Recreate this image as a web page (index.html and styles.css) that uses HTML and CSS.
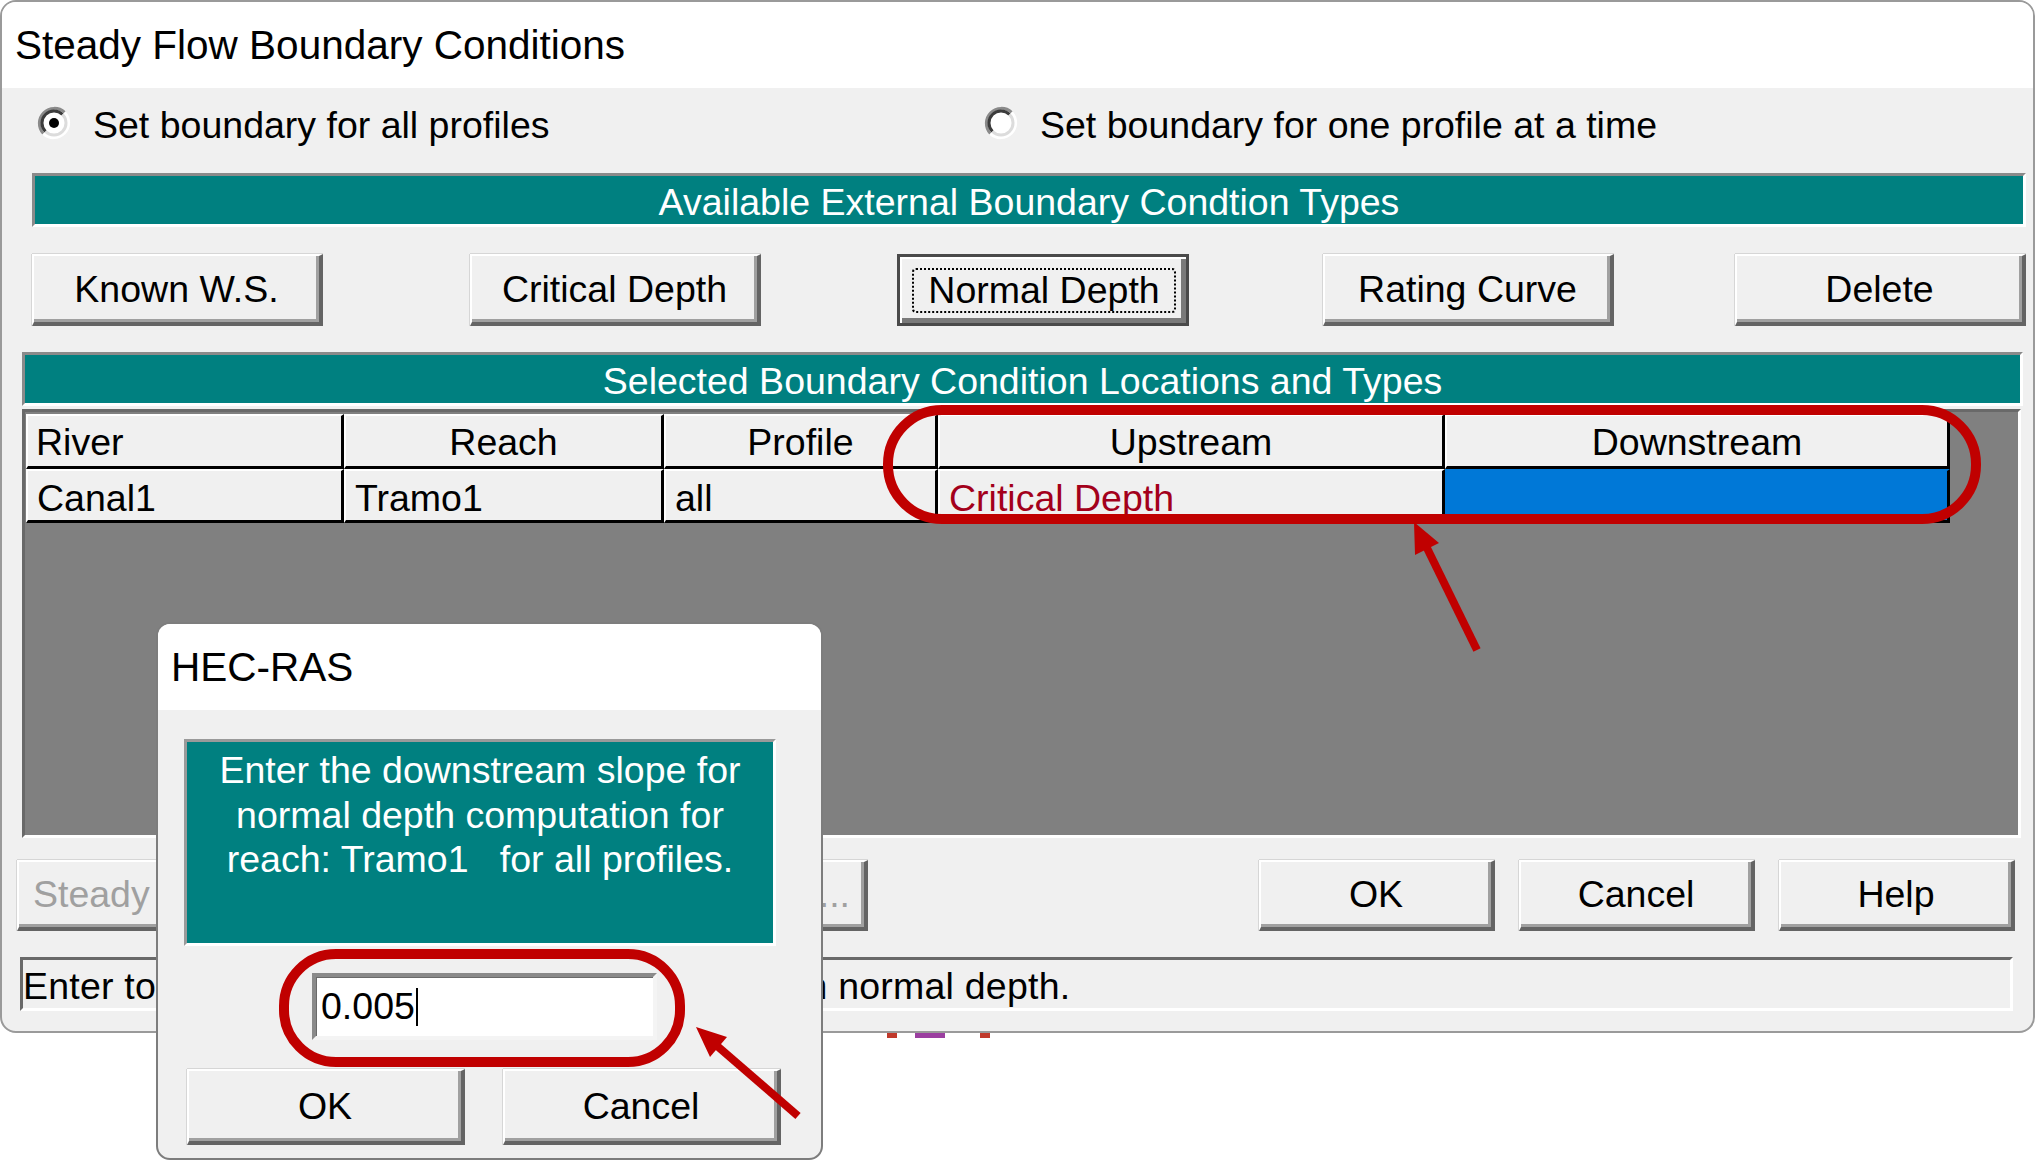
FILE: index.html
```html
<!DOCTYPE html>
<html>
<head>
<meta charset="utf-8">
<link rel="stylesheet" href="styles.css">
</head>
<body>
<div class="window">
  <div class="titlebar">Steady Flow Boundary Conditions</div>
  <div class="radios">
    <div class="radio">
      <svg class="radio-icon" width="34" height="34" viewBox="0 0 34 34">
        <circle cx="17" cy="17" r="15" fill="#fff"/>
        <path d="M6.4 27.6 A15 15 0 0 1 27.6 6.4" stroke="#8a8a8a" stroke-width="3" fill="none"/>
        <path d="M8.5 25.5 A12 12 0 0 1 25.5 8.5" stroke="#3c3c3c" stroke-width="3" fill="none"/>
        <path d="M27.6 6.4 A15 15 0 0 1 6.4 27.6" stroke="#ffffff" stroke-width="3" fill="none"/>
        <path d="M25.5 8.5 A12 12 0 0 1 8.5 25.5" stroke="#dcdcdc" stroke-width="3" fill="none"/>
        <circle cx="17" cy="17" r="5" fill="#000"/>
      </svg>
      <span>Set boundary for all profiles</span>
    </div>
    <div class="radio">
      <svg class="radio-icon" width="34" height="34" viewBox="0 0 34 34">
        <circle cx="17" cy="17" r="15" fill="#fff"/>
        <path d="M6.4 27.6 A15 15 0 0 1 27.6 6.4" stroke="#8a8a8a" stroke-width="3" fill="none"/>
        <path d="M8.5 25.5 A12 12 0 0 1 25.5 8.5" stroke="#3c3c3c" stroke-width="3" fill="none"/>
        <path d="M27.6 6.4 A15 15 0 0 1 6.4 27.6" stroke="#ffffff" stroke-width="3" fill="none"/>
        <path d="M25.5 8.5 A12 12 0 0 1 8.5 25.5" stroke="#dcdcdc" stroke-width="3" fill="none"/>
      </svg>
      <span>Set boundary for one profile at a time</span>
    </div>
  </div>

  <div class="banner banner-types">Available External Boundary Condtion Types</div>

  <div class="type-buttons">
    <button class="btn type-btn">Known W.S.</button>
    <button class="btn type-btn">Critical Depth</button>
    <button class="btn type-btn focused"><span class="focus-ring">Normal Depth</span></button>
    <button class="btn type-btn">Rating Curve</button>
    <button class="btn type-btn">Delete</button>
  </div>

  <div class="banner banner-selected">Selected Boundary Condition Locations and Types</div>

  <div class="grid-area">
    <table class="bc-table">
      <colgroup>
        <col class="c-river"><col class="c-reach"><col class="c-profile"><col class="c-up"><col class="c-down">
      </colgroup>
      <tr class="head">
        <td class="left">River</td>
        <td>Reach</td>
        <td>Profile</td>
        <td>Upstream</td>
        <td>Downstream</td>
      </tr>
      <tr class="data">
        <td>Canal1</td>
        <td>Tramo1</td>
        <td>all</td>
        <td class="crit">Critical Depth</td>
        <td class="sel"></td>
      </tr>
    </table>
  </div>

  <div class="bottom-row">
    <button class="btn wide disabled">Steady Flow Reach-Storage Area Optimization ...</button>
    <div class="actions">
      <button class="btn act">OK</button>
      <button class="btn act">Cancel</button>
      <button class="btn act">Help</button>
    </div>
  </div>

  <div class="status">Enter to set the downstream slope to be used in normal depth.</div>
</div>

<div class="dialog">
  <div class="dlg-title">HEC-RAS</div>
  <div class="dlg-body">
    <div class="dlg-msg">Enter the downstream slope for<br>normal depth computation for<br>reach: Tramo1&nbsp;&nbsp;&nbsp;for all profiles.</div>
    <div class="dlg-input"><span>0.005</span><span class="caret"></span></div>
    <div class="dlg-buttons">
      <button class="btn dlg-btn">OK</button>
      <button class="btn dlg-btn">Cancel</button>
    </div>
  </div>
</div>

<svg class="annotations" width="2038" height="1168" viewBox="0 0 2038 1168">
  <rect x="888" y="410" width="1088" height="109" rx="54" ry="54" fill="none" stroke="#c00000" stroke-width="10"/>
  <line x1="1477" y1="650" x2="1426" y2="546" stroke="#c00000" stroke-width="8"/>
  <polygon points="1414,522 1439,543 1415,555" fill="#c00000"/>
  <rect x="284" y="954" width="396" height="108" rx="52" ry="52" fill="none" stroke="#c00000" stroke-width="10"/>
  <line x1="798" y1="1116" x2="716" y2="1045" stroke="#c00000" stroke-width="8"/>
  <polygon points="696,1027 727,1037 710,1057" fill="#c00000"/>
  <rect x="887" y="1033" width="10" height="5" fill="#c0392b"/>
  <rect x="915" y="1033" width="30" height="5" fill="#9b3fa0"/>
  <rect x="980" y="1033" width="10" height="5" fill="#c0392b"/>
</svg>
</body>
</html>
```

FILE: styles.css
```css
html, body {
  margin: 0;
  padding: 0;
}

body {
  position: relative;
  width: 2038px;
  height: 1168px;
  overflow: hidden;
  background: #ffffff;
  font-family: "Liberation Sans", Arial, sans-serif;
  font-size: 37.5px;
  color: #000;
}

.window {
  box-sizing: border-box;
  width: 2035px;
  height: 1033px;
  border: 2px solid #9a9a9a;
  border-radius: 16px;
  background: #f0f0f0;
  overflow: hidden;
  display: flex;
  flex-direction: column;
}

.titlebar {
  height: 86px;
  flex: none;
  background: #ffffff;
  display: flex;
  align-items: center;
  padding-left: 13px;
  font-size: 40.5px;
}

.radios {
  height: 75px;
  flex: none;
  display: grid;
  grid-template-columns: 947px auto;
  align-items: center;
  padding-left: 35px;
}

.radio {
  display: flex;
  align-items: center;
  gap: 22px;
}

.radio-icon {
  flex: none;
  margin-top: -6px;
}

.banner {
  box-sizing: border-box;
  height: 54px;
  flex: none;
  background: #008080;
  color: #ffffff;
  border-style: solid;
  border-width: 3px;
  border-color: #8a8a8a #ffffff #ffffff #8a8a8a;
  display: flex;
  align-items: center;
  justify-content: center;
  padding-top: 4px;
}

.banner-types {
  margin: 10px 7px 0 30px;
}

.banner-selected {
  margin: 26px 10px 0 20px;
}

.btn {
  box-sizing: border-box;
  margin: 0;
  padding: 0;
  font: inherit;
  color: #000;
  background: #f0f0f0;
  border-style: solid;
  border-width: 2px 4px 4px 2px;
  border-color: #ffffff #646464 #646464 #ffffff;
  box-shadow: inset -3px -3px 0 #a0a0a0, 0 -1px 0 #d6d6d6, -1px 0 0 #d6d6d6;
  display: flex;
  align-items: center;
  justify-content: center;
  white-space: nowrap;
}

.type-buttons {
  height: 72px;
  flex: none;
  margin: 27px 0 0 30px;
  display: grid;
  grid-template-columns: 438px 427px 426px 412px 291px;
}

.type-btn {
  width: 291px;
  height: 72px;
}

.btn.focused {
  width: 292px;
  border-width: 3px;
  border-color: #4a4a4a;
  box-shadow: inset 2px 2px 0 #ffffff, inset -5px -5px 0 #7a7a7a;
  padding: 11px 10px 10px 12px;
}

.focus-ring {
  box-sizing: border-box;
  width: 100%;
  height: 100%;
  border: 2px dotted #000;
  border-radius: 4px;
  display: flex;
  align-items: center;
  justify-content: center;
}

.grid-area {
  box-sizing: border-box;
  height: 429px;
  flex: none;
  margin: 3px 12px 0 20px;
  background: #808080;
  border-style: solid;
  border-width: 3px;
  border-color: #696969 #ffffff #ffffff #696969;
  padding: 2px 0 0 1px;
}

.bc-table {
  border-collapse: separate;
  border-spacing: 0;
  table-layout: fixed;
  width: 1924px;
}

.c-river { width: 318px; }
.c-reach { width: 320px; }
.c-profile { width: 274px; }
.c-up { width: 507px; }
.c-down { width: 505px; }

.bc-table td {
  box-sizing: border-box;
  background: #f0f0f0;
  border-style: solid;
  border-width: 2px 3px 3px 2px;
  border-color: #ffffff #000000 #000000 #ffffff;
  padding: 0 0 0 9px;
  white-space: nowrap;
  overflow: hidden;
  line-height: 1;
}

.bc-table .head td {
  height: 55px;
  text-align: center;
  padding: 4px 0 0 0;
}

.bc-table .head td.left {
  text-align: left;
  padding-left: 8px;
}

.bc-table .data td {
  height: 54px;
  padding-top: 6px;
}

.bc-table td.crit {
  color: #a3001b;
}

.bc-table td.sel {
  background: #0078d7;
  border-color: #0078d7 #000000 #000000 #0078d7;
}

.bottom-row {
  height: 71px;
  flex: none;
  margin: 22px 18px 0 15px;
  display: flex;
  justify-content: space-between;
}

.wide {
  width: 851px;
  height: 71px;
}

.btn.disabled {
  color: #a0a0a0;
}

.actions {
  display: flex;
  gap: 24px;
}

.act {
  width: 236px;
  height: 71px;
}

.status {
  box-sizing: border-box;
  height: 54px;
  flex: none;
  margin: 26px 20px 0 18px;
  border-style: solid;
  border-width: 3px;
  border-color: #696969 #ffffff #ffffff #696969;
  display: flex;
  align-items: center;
  padding-left: 0;
  padding-top: 4px;
  white-space: nowrap;
  overflow: hidden;
  letter-spacing: 0.22px;
}

/* HEC-RAS popup window */
.dialog {
  position: absolute;
  left: 156px;
  top: 622px;
  box-sizing: border-box;
  width: 667px;
  height: 538px;
  border: 2px solid #7d7d7d;
  border-radius: 14px;
  background: #f0f0f0;
  overflow: hidden;
}

.dlg-title {
  height: 86px;
  background: #ffffff;
  display: flex;
  align-items: center;
  padding-left: 13px;
  font-size: 40.5px;
}

.dlg-body {
  display: flex;
  flex-direction: column;
  align-items: flex-start;
}

.dlg-msg {
  box-sizing: border-box;
  width: 592px;
  height: 207px;
  margin: 29px 0 0 26px;
  background: #008080;
  color: #ffffff;
  border-style: solid;
  border-width: 3px;
  border-color: #9a9a9a #ffffff #ffffff #9a9a9a;
  text-align: center;
  line-height: 44.5px;
  padding-top: 6px;
  white-space: nowrap;
}

.dlg-input {
  box-sizing: border-box;
  width: 345px;
  height: 67px;
  margin: 27px 0 0 154px;
  background: #ffffff;
  border-style: solid;
  border-width: 4px;
  border-color: #8a8a8a #f4f4f4 #f4f4f4 #8a8a8a;
  box-shadow: inset 1px 1px 0 #6a6a6a;
  display: flex;
  align-items: center;
  padding-left: 5px;
}

.caret {
  display: inline-block;
  width: 2px;
  height: 38px;
  background: #000;
  margin-left: 1px;
}

.dlg-buttons {
  display: flex;
  gap: 38px;
  margin: 29px 0 0 29px;
}

.dlg-btn {
  width: 278px;
  height: 76px;
}

.annotations {
  position: absolute;
  left: 0;
  top: 0;
  pointer-events: none;
}
```
